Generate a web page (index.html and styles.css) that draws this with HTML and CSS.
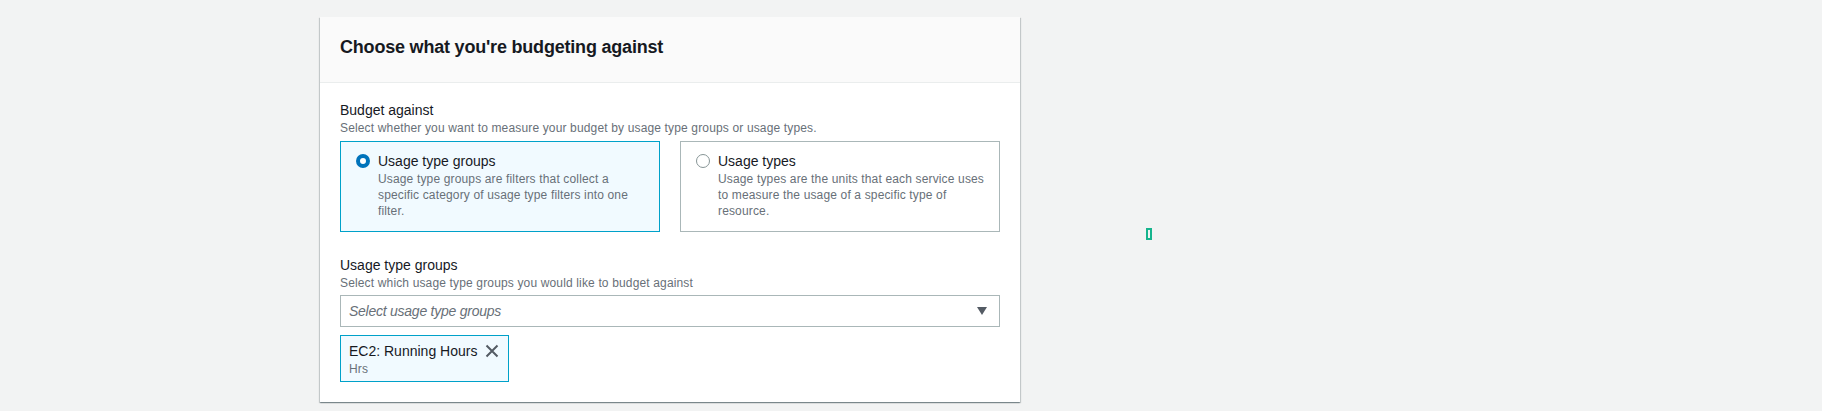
FILE: index.html
```html
<!DOCTYPE html>
<html lang="en">
<head>
<meta charset="utf-8">
<title>Choose what you're budgeting against</title>
<link rel="stylesheet" href="styles.css">
</head>
<body>
<div class="page">
  <section class="card">
    <header class="card-header">
      <h2 class="card-title">Choose what you're budgeting against</h2>
    </header>
    <div class="card-body">
      <div class="field">
        <div class="label">Budget against</div>
        <div class="hint">Select whether you want to measure your budget by usage type groups or usage types.</div>
        <div class="tiles">
          <div class="tile tile-selected">
            <span class="radio radio-on"></span>
            <div class="tile-text">
              <div class="tile-title">Usage type groups</div>
              <div class="tile-desc">Usage type groups are filters that collect a specific category of usage type filters into one filter.</div>
            </div>
          </div>
          <div class="tile">
            <span class="radio"></span>
            <div class="tile-text">
              <div class="tile-title">Usage types</div>
              <div class="tile-desc">Usage types are the units that each service uses to measure the usage of a specific type of resource.</div>
            </div>
          </div>
        </div>
      </div>
      <div class="field field-second">
        <div class="label">Usage type groups</div>
        <div class="hint">Select which usage type groups you would like to budget against</div>
        <div class="select">
          <span class="placeholder">Select usage type groups</span>
          <svg class="caret" width="10" height="8" viewBox="0 0 10 8"><path d="M0 0h10L5 8z" fill="#545b64"/></svg>
        </div>
        <div class="tokens">
          <div class="token">
            <div class="token-text">
              <div class="token-title">EC2: Running Hours</div>
              <div class="token-sub">Hrs</div>
            </div>
            <svg class="token-x" width="14" height="14" viewBox="0 0 14 14"><path d="M1.5 1.5l11 11M12.5 1.5l-11 11" stroke="#545b64" stroke-width="2" fill="none"/></svg>
          </div>
        </div>
      </div>
    </div>
  </section>
</div>
<span class="cursor-mark"></span>
</body>
</html>
```

FILE: styles.css
```css
html, body {
  margin: 0;
  padding: 0;
}
body {
  background: #f2f3f3;
  font-family: "Liberation Sans", Arial, sans-serif;
  color: #16191f;
  width: 1822px;
  height: 411px;
  overflow: hidden;
  position: relative;
}
.page {
  padding: 17px 0 0 320px;
}
.card {
  width: 700px;
  background: #fff;
  box-shadow: 0 1px 1px 0 rgba(0, 28, 36, 0.3), 1px 1px 1px 0 rgba(0, 28, 36, 0.15), -1px 1px 1px 0 rgba(0, 28, 36, 0.15);
}
.card-header {
  background: #fafafa;
  border-bottom: 1px solid #eaeded;
  padding: 19px 20px 24px;
}
.card-title {
  margin: 0;
  font-size: 18px;
  line-height: 22px;
  font-weight: 700;
  letter-spacing: -0.2px;
  color: #16191f;
}
.card-body {
  padding: 17px 20px 20px;
}
.label {
  font-size: 14px;
  line-height: 20px;
  color: #16191f;
}
.hint {
  font-size: 12px;
  line-height: 16px;
  letter-spacing: 0.15px;
  color: #687078;
}
.tiles {
  margin-top: 5px;
  display: grid;
  grid-template-columns: 1fr 1fr;
  gap: 20px;
}
.tile {
  display: flex;
  align-items: flex-start;
  border: 1px solid #aab7b8;
  padding: 9px 15px 11px;
  min-height: 69px;
}
.tile-selected {
  border-color: #00a1c9;
  background: #f1faff;
}
.radio {
  flex: none;
  box-sizing: border-box;
  width: 14px;
  height: 14px;
  border-radius: 50%;
  border: 1px solid #879596;
  background: #fff;
  margin: 3px 8px 0 0;
}
.radio-on {
  border: 4px solid #0073bb;
}
.tile-title {
  font-size: 14px;
  line-height: 20px;
  color: #16191f;
}
.tile-desc {
  font-size: 12px;
  line-height: 16px;
  letter-spacing: 0.15px;
  color: #687078;
}
.field-second {
  margin-top: 23px;
}
.select {
  margin-top: 4px;
  height: 32px;
  box-sizing: border-box;
  border: 1px solid #aab7b8;
  display: flex;
  align-items: center;
  justify-content: space-between;
  padding: 0 12px 0 8px;
}
.placeholder {
  font-size: 14px;
  font-style: italic;
  letter-spacing: -0.25px;
  color: #687078;
}
.caret {
  display: block;
}
.tokens {
  margin-top: 8px;
  display: flex;
}
.token {
  display: flex;
  align-items: flex-start;
  border: 1px solid #00a1c9;
  background: #f1faff;
  padding: 5px 9px 4px 8px;
  gap: 8px;
}
.token-title {
  font-size: 14px;
  line-height: 20px;
  color: #16191f;
}
.token-sub {
  font-size: 12px;
  line-height: 16px;
  letter-spacing: 0.15px;
  color: #687078;
}
.token-x {
  display: block;
  margin-top: 3px;
}
.cursor-mark {
  position: absolute;
  left: 1146px;
  top: 228px;
  width: 6px;
  height: 12px;
  box-sizing: border-box;
  border: 2px solid #16b48d;
}
```
